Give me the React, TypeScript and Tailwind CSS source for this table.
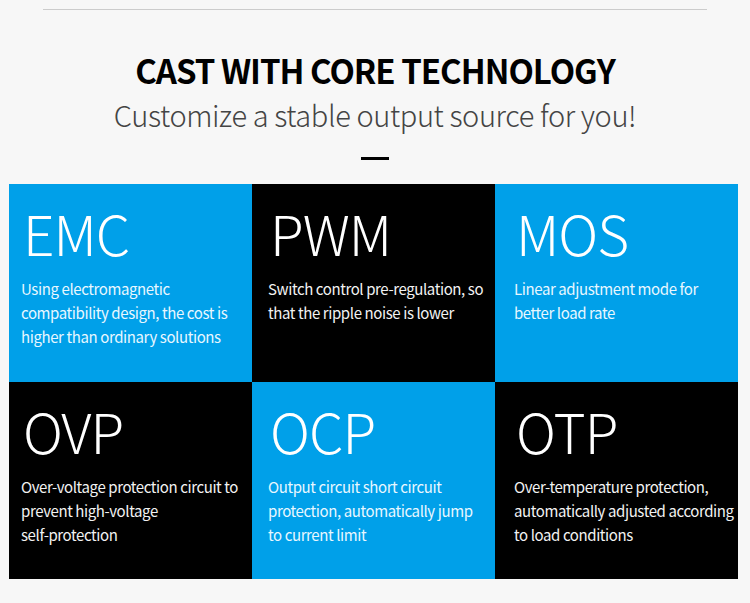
const tiles = [
  { title: "EMC", blue: true, pad: "pl-[12px]", text: ["Using electromagnetic", "compatibility design, the cost is", "higher than ordinary solutions"] },
  { title: "PWM", blue: false, pad: "pl-[16px]", text: ["Switch control pre-regulation, so", "that the ripple noise is lower"] },
  { title: "MOS", blue: true, pad: "pl-[19px]", text: ["Linear adjustment mode for", "better load rate"] },
  { title: "OVP", blue: false, pad: "pl-[12px]", text: ["Over-voltage protection circuit to", "prevent high-voltage", "self-protection"] },
  { title: "OCP", blue: true, pad: "pl-[16px]", text: ["Output circuit short circuit", "protection, automatically jump", "to current limit"] },
  { title: "OTP", blue: false, pad: "pl-[19px]", text: ["Over-temperature protection,", "automatically adjusted according", "to load conditions"] },
];

export default function App() {
  return (
    <div
      className="w-[750px] h-[603px] bg-[#f7f7f7] overflow-hidden"
      style={{ fontFamily: '"Noto Sans CJK SC", "Noto Sans", sans-serif' }}
    >
      <div className="pt-[9px] px-[43px]">
        <div className="h-px bg-[#cccccc]" />
      </div>

      {/* Heading */}
      <div className="flex flex-col items-center">
        <h1 className="mt-[40px] text-[33px] leading-[40px] font-bold text-black tracking-[-1px]">
          CAST WITH CORE TECHNOLOGY
        </h1>
        <p className="mt-[6px] text-[29px] leading-[36px] font-light text-[#444444] tracking-[-0.4px]">
          Customize a stable output source for you!
        </p>
        <div className="mt-[25px] w-[28px] h-[3px] bg-black" />
      </div>

      {/* Feature grid */}
      <div className="mt-[24px] ml-[9px] w-[729px] grid grid-cols-3 grid-rows-[198px_197px]">
        {tiles.map((t) => (
          <div
            key={t.title}
            className={`${t.blue ? "bg-[#00a0e9] text-[#e8f7ff]" : "bg-black text-[#f2f2f2]"} ${t.pad} pt-[16px] overflow-hidden`}
          >
            <div className="text-[55px] leading-[64px] font-light text-white tracking-[-1px] pl-[2px]">
              {t.title}
            </div>
            <div className="mt-[13px] text-[15px] leading-[24px] tracking-[-0.4px] whitespace-nowrap">
              {t.text.map((l) => (
                <div key={l}>{l}</div>
              ))}
            </div>
          </div>
        ))}
      </div>
    </div>
  );
}
